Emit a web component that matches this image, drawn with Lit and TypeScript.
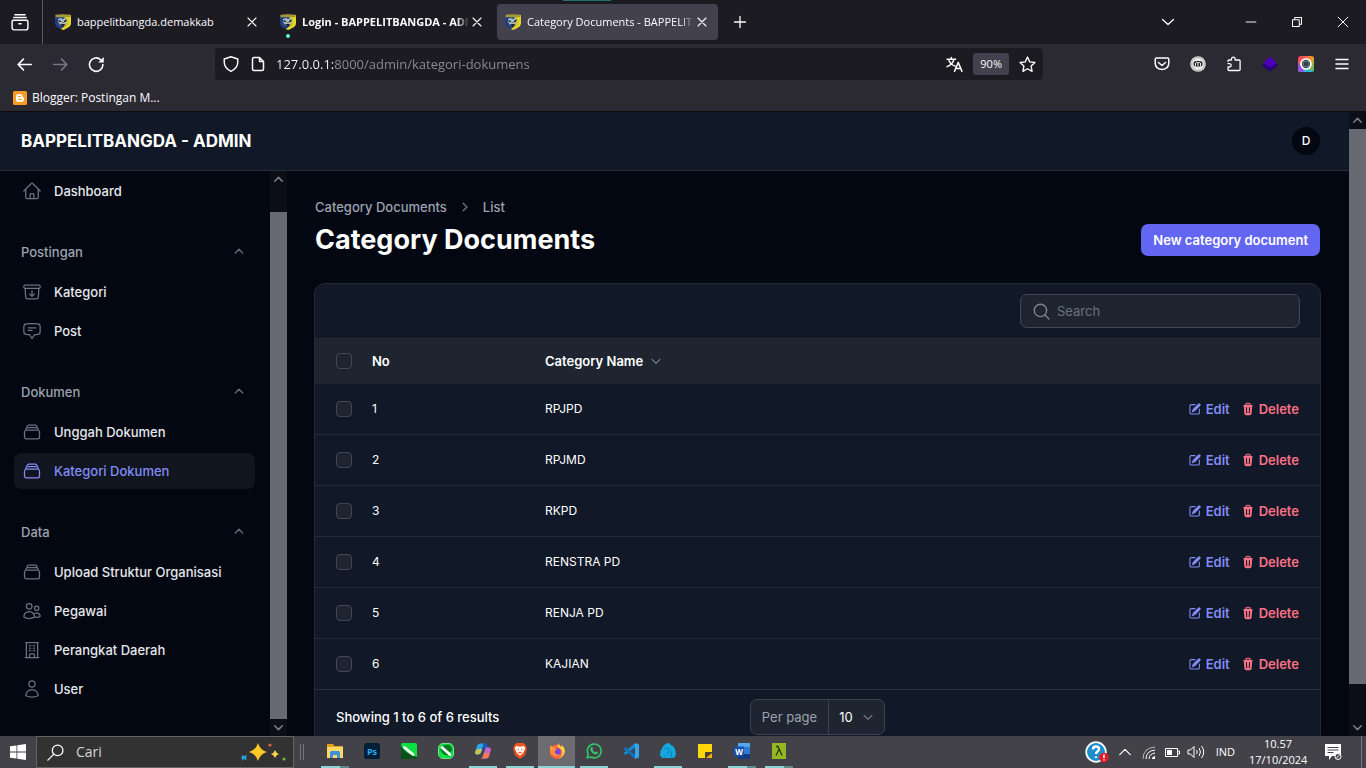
import { LitElement, html, svg, css, nothing, TemplateResult } from "lit";
import { customElement } from "lit/decorators.js";
import { classMap } from "lit/directives/class-map.js";

const OUTLINE: Record<string, string> = {
  home: "m2.25 12 8.954-8.955c.44-.439 1.152-.439 1.591 0L21.75 12M4.5 9.75v10.125c0 .621.504 1.125 1.125 1.125H9.75v-4.875c0-.621.504-1.125 1.125-1.125h2.25c.621 0 1.125.504 1.125 1.125V21h4.125c.621 0 1.125-.504 1.125-1.125V9.75M8.25 21h8.25",
  archive: "m20.25 7.5-.625 10.632a2.25 2.25 0 0 1-2.247 2.118H6.622a2.25 2.25 0 0 1-2.247-2.118L3.75 7.5m8.25 3v6.75m0 0-3-3m3 3 3-3M3.375 7.5h17.25c.621 0 1.125-.504 1.125-1.125v-1.5c0-.621-.504-1.125-1.125-1.125H3.375c-.621 0-1.125.504-1.125 1.125v1.5c0 .621.504 1.125 1.125 1.125Z",
  chat: "M7.5 8.25h9m-9 3H12m-9.75 1.51c0 1.6 1.123 2.994 2.707 3.227 1.129.166 2.27.293 3.423.379.35.026.67.21.865.501L12 21l2.755-4.133a1.14 1.14 0 0 1 .865-.501 48.172 48.172 0 0 0 3.423-.379c1.584-.233 2.707-1.626 2.707-3.228V6.741c0-1.602-1.123-2.995-2.707-3.228A48.394 48.394 0 0 0 12 3c-2.392 0-4.744.175-7.043.513C3.373 3.746 2.25 5.14 2.25 6.741v6.018Z",
  stack: "M6 6.878V6a2.25 2.25 0 0 1 2.25-2.25h7.5A2.25 2.25 0 0 1 18 6v.878m-12 0c.235-.083.487-.128.75-.128h10.5c.263 0 .515.045.75.128m-12 0A2.25 2.25 0 0 0 4.5 9v.878m13.5-3A2.25 2.25 0 0 1 19.5 9v.878m0 0a2.246 2.246 0 0 0-.75-.128H5.25c-.263 0-.515.045-.75.128m15 0A2.25 2.25 0 0 1 21 12v6a2.25 2.25 0 0 1-2.25 2.25H5.25A2.25 2.25 0 0 1 3 18v-6c0-.98.626-1.813 1.5-2.122",
  office: "M3.75 21h16.5M4.5 3h15M5.25 3v18m13.5-18v18M9 6.75h1.5m-1.5 3h1.5m-1.5 3h1.5m3-6H15m-1.5 3H15m-1.5 3H15M9 21v-3.375c0-.621.504-1.125 1.125-1.125h3.75c.621 0 1.125.504 1.125 1.125V21",
  users: "M15 19.128a9.38 9.38 0 0 0 2.625.372 9.337 9.337 0 0 0 4.121-.952 4.125 4.125 0 0 0-7.533-2.493M15 19.128v-.003c0-1.113-.285-2.16-.786-3.07M15 19.128v.106A12.318 12.318 0 0 1 8.624 21c-2.331 0-4.512-.645-6.374-1.766l-.001-.109a6.375 6.375 0 0 1 11.964-3.07M12 6.375a3.375 3.375 0 1 1-6.75 0 3.375 3.375 0 0 1 6.75 0Zm8.25 2.25a2.625 2.625 0 1 1-5.25 0 2.625 2.625 0 0 1 5.25 0Z",
  user: "M15.75 6a3.75 3.75 0 1 1-7.5 0 3.75 3.75 0 0 1 7.5 0ZM4.501 20.118a7.5 7.5 0 0 1 14.998 0A17.933 17.933 0 0 1 12 21.75c-2.676 0-5.216-.584-7.499-1.632Z",
};

const outline = (name: string) => html`<svg class="nav-icon" viewBox="0 0 24 24" fill="none" stroke="currentColor" stroke-width="1.5" stroke-linecap="round" stroke-linejoin="round"><path d=${OUTLINE[name]} /></svg>`;

const chevron = (dir: "up" | "down" | "right", size = 18) => {
  const d = { up: "M5.75 11.25 10 7l4.25 4.25", down: "M5.75 8.25 10 12.5l4.25-4.25", right: "M8 5.75 12.25 10 8 14.25" }[dir];
  return html`<svg class="chev" width=${size} height=${size} viewBox="0 0 20 20" fill="none" stroke="currentColor" stroke-width="1.5" stroke-linecap="round" stroke-linejoin="round"><path d=${d} /></svg>`;
};

const line = (size: number, body: TemplateResult<2>, cls = "", width = 1.5) => html`<svg class=${cls} width=${size} height=${size} viewBox="0 0 16 16" fill="none" stroke="currentColor" stroke-width=${width} stroke-linecap="round" stroke-linejoin="round">${body}</svg>`;

const closeIcon = () => line(16, svg`<path d="m4 4 8 8M12 4l-8 8" />`, "", 1.1);

const crest = () => html`<svg width="16" height="16" viewBox="0 0 16 16">
  <path d="M0 1.500Q8-.5 16 1.500V9c0 3.600-4 5.500-8 7-4-1.500-8-3.400-8-7Z" fill="#243c84" />
  <path d="M9 1h7v8c0 3.600-4 5.500-8 7l-2-1 5-4Z" fill="#e8d725" />
  <path d="M.5.8Q8-.4 15.500.8v2.400H.5Z" fill="#a49a35" />
  <path d="m3 5 3-1 2 1 3-1 1 2-1 4-3 2-3-1-2-3Z" fill="#9fb9c4" />
  <path d="m3 6 3 1v1H4Zm6 1 3-2-1 3H9Zm-4 3h5l-2 3Z" fill="#18222d" />
  <path d="m10 11 4-6-1 6-5 4Z" fill="#d3c021" />
  <path d="M7 8h2v1H7Z" fill="#d75d42" />
</svg>`;

interface Tab { title: string; bold?: boolean; active?: boolean }
const TABS: Tab[] = [
  { title: "bappelitbangda.demakkab" },
  { title: "Login - BAPPELITBANGDA - ADMIN", bold: true },
  { title: "Category Documents - BAPPELITBANGDA", active: true },
];

const GROUPS = [
  { label: "", items: [{ icon: "home", text: "Dashboard" }] },
  { label: "Postingan", items: [{ icon: "archive", text: "Kategori" }, { icon: "chat", text: "Post" }] },
  { label: "Dokumen", items: [{ icon: "stack", text: "Unggah Dokumen" }, { icon: "stack", text: "Kategori Dokumen", active: true }] },
  { label: "Data", items: [{ icon: "stack", text: "Upload Struktur Organisasi" }, { icon: "users", text: "Pegawai" }, { icon: "office", text: "Perangkat Daerah" }, { icon: "user", text: "User" }] },
] as { label: string; items: { icon: string; text: string; active?: boolean }[] }[];

const ROWS = ["RPJPD", "RPJMD", "RKPD", "RENSTRA PD", "RENJA PD", "KAJIAN"];

const APPS: { name: string; state?: "open" | "multi" | "focus"; art: TemplateResult<2> }[] = [
  { name: "File Explorer", state: "multi", art: svg`<path d="M0 1h6l1.500 2H16v12H0Z" fill="#e2a21d" /><path d="M0 4h16v11H0Z" fill="#ffd868" /><path d="M3 15V9.500C3 8.500 3.800 8 4.500 8h7c.7 0 1.500.5 1.500 1.500V15h-3v-3H6v3Z" fill="#3f92d6" />` },
  { name: "Photoshop", art: svg`<rect width="16" height="16" rx="2.500" fill="#001e36" /><text x="8" y="11.500" text-anchor="middle" font-family="Open Sans" font-size="9" font-weight="700" fill="#31a8ff">Ps</text>` },
  { name: "CorelDRAW", art: svg`<rect width="16" height="16" rx="1.500" fill="#08e040" /><path d="M0 3Q5 11 16 14v2H0Z" fill="#07501a" /><path d="m3.500 4.500 8.500 7" stroke="#fff" stroke-width="2.800" stroke-linecap="round" />` },
  { name: "Corel Photo-Paint", art: svg`<rect x=".5" y=".5" width="15" height="15" rx="4.500" fill="#08d53c" stroke="#73e58c" /><path d="M2.500 6q3-5 9-4l3 4-4 6Q4 13 2.500 6Z" fill="#087a22" /><path d="M2 9q3 4 8 5H5q-3-1-3-5Z" fill="#17f050" /><path d="m4 4.500 8 7" stroke="#fff" stroke-width="2.800" stroke-linecap="round" />` },
  { name: "Copilot", state: "open", art: svg`<path d="M5 .5h5.500Q8.500 1 8 3L6 9.500Q5.300 11.500 3 11.500H2Q-.5 11.500.3 8.500L2 3Q2.700.5 5 .5Z" fill="#2ba5e6" /><path d="M.3 8.500Q1 6 3 6h4L6 9.500q-.7 2-3 2H2q-2.500 0-1.700-3Z" fill="#c9c452" /><path d="M8 .5h2.500q1.500 0 2 1.700l.8 2.600H11q-2 0-2.700 2L7.500 9 7 6 8 3Z" fill="#2358b8" /><path d="M11 4.500h3q2.500 0 1.700 3L14 13q-.7 2.500-3 2.500H5.500q2-.5 2.500-2.500l2-6.500q.3-1.500 1-2Z" fill="#c766cf" /><path d="M9 10h6l-1 3q-.7 2.500-3 2.500H5.500q2-.5 2.500-2.500Z" fill="#f2785c" />` },
  { name: "Brave", state: "open", art: svg`<path d="M4.500 0h7l2 2 1.500 3-2 7-5 4-5-4-2-7 1.500-3Z" fill="#f4511e" /><path d="m4 3 4 .7L12 3l1.200 2.500L11.500 9 10 11l-2 1.500L6 11 4.500 9 2.800 5.500Z" fill="#fff" /><path d="m4.500 5.500 2.500.7v1.300Zm7 0L9 6.200v1.300ZM6 9.500l2-1 2 1-2 1.300Z" fill="#f4511e" />` },
  { name: "Firefox", state: "focus", art: svg`<circle cx="8" cy="8.700" r="7.300" fill="#ff643f" /><path d="M10 0q0 3 2 4 1-1 1-2 3 3 3 6-1 6-7 8 5-3 4-8-2-4-5-4Z" fill="#ffd23b" /><path d="M1 5q0-2 1-3l1 2 4 1 3 3-2 4q-4 1-6-2Z" fill="#ff9f33" /><circle cx="8.200" cy="8.700" r="3.500" fill="#7c42dd" /><path d="M3 6q3-1 5 1-3 0-2 3 2 3 5 1-2 4-6 2Q2 10 3 6Z" fill="#ff8d38" />` },
  { name: "WhatsApp", state: "open", art: svg`<path d="m1.200 14.800 1-3.600A6.900 6.900 0 1 1 5 14Z" fill="none" stroke="#31c76a" stroke-width="1.600" /><path d="M5.200 4.300c.6-.6 1-.5 1.300.1l.6 1.300-.7 1.100c.6 1.200 1.500 2 2.700 2.600l1-1 1.700.8c.4.3-.1 1.600-1.300 2.100-2.700.7-6.600-3.200-6.200-5.400Z" fill="#31c76a" />` },
  { name: "Visual Studio Code", art: svg`<path d="m12 0 4 1.600v12.800L12 16Z" fill="#35a6ee" /><path d="M12 0v4.300L2.500 12 .5 10.300Z" fill="#168bd5" /><path d="m.5 5.700 2-1.700L12 11.700V16Z" fill="#1174bb" />` },
  { name: "Laragon MySQL", state: "open", art: svg`<path d="M8 0q2 0 3 2 3 1 4 4l1 5-1 3-2 1H3q-2 0-3-3 0-4 2-7 2-4 6-5Z" fill="#12a8df" /><path d="M4 6q3-2 5 0 1 3-2 5M11 8q1 3 0 6M5 12v2" fill="none" stroke="#0b82b4" />` },
  { name: "Sticky Notes", art: svg`<path d="M1 1h14v9l-5 5H1Z" fill="#ffd60a" /><path d="M8 15V9h7v6Z" fill="#474230" /><path d="m9 15 6-5v5Z" fill="#f4ae13" />` },
  { name: "Word", state: "multi", art: svg`<rect x="4" width="12" height="16" rx="1" fill="#2b7cd3" /><path d="M4 0h12v4H4Z" fill="#55a7ed" /><path d="M4 11h12v5H4Z" fill="#143c80" /><rect y="3.500" width="10" height="10" rx="1" fill="#174fae" /><text x="5" y="11.500" text-anchor="middle" font-family="Open Sans" font-size="8" font-weight="700" fill="#fff">W</text>` },
  { name: "Lambda", state: "multi", art: svg`<rect x="1" width="14" height="16" fill="#93b71e" /><path d="M5 3.500h2l4 9M8 6.500l-3 6" fill="none" stroke="#263411" stroke-width="1.300" />` },
];

@customElement("app-root")
export class AppRoot extends LitElement {
  static styles = css`
    :host { display: flex; flex-direction: column; height: 100vh; overflow: hidden; background: #030712; color: #fff; font-family: Inter, sans-serif; font-size: 13px; line-height: 20px; }
    * { box-sizing: border-box; }
    button, input, select { font: inherit; color: inherit; margin: 0; padding: 0; border: 0; background: none; outline: none; }
    a { color: inherit; text-decoration: none; }
    svg { display: block; flex: none; }

    /* browser chrome */
    .chrome { flex: none; background: #2b2a33; color: #fbfbfe; font: 12px/16px "Open Sans", sans-serif; border-bottom: 1px solid #0c0c0d; }
    .tabs { position: relative; display: flex; align-items: center; height: 44px; background: #1c1b22; }
    .tabs::before { content: ""; position: absolute; top: 0; left: 563px; width: 48px; height: 1px; background: #1f6f70; }
    .history { display: grid; place-items: center; width: 43px; height: 44px; margin-right: 4px; padding-right: 3px; border-right: 1px solid #5b5a63; }
    .tab { position: relative; display: flex; align-items: center; gap: 6px; width: 221px; height: 36px; margin-right: 4px; padding: 0 8px; border-radius: 4px; font-size: 11px; }
    .tab.active { background: #42414d; }
    .tab-title { flex: 1; min-width: 0; overflow: hidden; white-space: nowrap; mask-image: linear-gradient(to left, transparent, #000 12px); }
    .tab.short .tab-title { mask-image: none; }
    .tab.bold .tab-title { font-weight: 700; }
    .tab button { margin-left: -6px; }
    .sound { position: absolute; left: 14px; bottom: 2px; width: 4px; height: 4px; border-radius: 50%; background: #54ffbd; }
    .new-tab { margin-left: 10px; }
    .window { display: flex; align-items: center; margin-left: auto; }
    .window button { display: grid; place-items: center; width: 46px; height: 44px; }
    .window .list { margin-right: 37px; }
    .bar { display: flex; align-items: center; height: 40px; padding: 0 15px; }
    .nav { display: flex; gap: 18px; }
    .nav .off { color: #777680; }
    .nav button, .ext button { display: grid; place-items: center; width: 18px; height: 24px; }
    .url { display: flex; align-items: center; gap: 10px; flex: 0 1 828px; height: 32px; margin-left: 110px; padding: 0 7px; border-radius: 4px; background: #1c1b22; }
    .url input { flex: 1; min-width: 0; font-size: 13px; color: transparent; background: linear-gradient(to right, #fbfbfe 58px, #8d8c96 58px); background-clip: text; -webkit-background-clip: text; }
    .zoom { padding: 3px 7px; border-radius: 3px; background: #42414d; font-size: 11px; }
    .ext { display: flex; gap: 18px; margin-left: auto; }
    .bookmarks { display: flex; height: 27px; padding: 0 13px; align-items: center; }
    .bookmarks a { display: flex; gap: 5px; align-items: center; }

    /* page */
    .page { flex: 1; min-height: 0; display: grid; grid-template-columns: minmax(0, 1fr) 17px; }
    .view { display: flex; flex-direction: column; min-height: 0; min-width: 0; }
    .topbar { flex: none; display: flex; align-items: center; justify-content: space-between; height: 59px; padding: 0 29px 0 21px; background: #111827; border-bottom: 1px solid #262c38; }
    .brand { font-size: 17px; font-weight: 700; }
    .avatar { width: 28px; height: 28px; border-radius: 50%; background: #030712; font-size: 12px; font-weight: 500; }
    .body { flex: 1; min-height: 0; display: flex; }
    .side { flex: none; display: grid; grid-template-columns: 1fr 17px; width: 287px; min-height: 0; }
    .side nav { display: flex; flex-direction: column; gap: 25px; padding: 2px 15px 0 14px; overflow: hidden; }
    .group { display: flex; flex-direction: column; gap: 4px; }
    .group-head { display: flex; align-items: center; justify-content: space-between; height: 36px; padding: 0 7px; color: #9ca3af; font-weight: 500; }
    .group-items { display: flex; flex-direction: column; gap: 3px; }
    .item { display: flex; align-items: center; gap: 12px; height: 36px; padding: 0 8px; border-radius: 7px; color: #e5e7eb; font-weight: 500; }
    .item.active { background: #11151f; color: #818cf8; }
    .nav-icon { width: 20px; height: 20px; color: #6b7280; }
    .item.active .nav-icon { color: #818cf8; }
    .chev { color: #6b7280; }
    .scroll { display: flex; flex-direction: column; background: #0b0d17; color: #777a82; }
    .scroll span { display: grid; place-items: center; height: 17px; }
    .scroll i { background: #686a72; }
    .side .scroll i { flex: 1; margin-top: 24px; }
    .page > .scroll i { flex: 1; }
    .page > .scroll .rest { flex: none; height: 35px; }
    main { flex: 1; min-width: 0; padding: 26px 28px 0; overflow: hidden; }
    .crumbs { display: flex; align-items: center; gap: 9px; color: #9ca3af; font-weight: 500; }
    .title-row { display: flex; align-items: center; justify-content: space-between; height: 46px; padding-right: 1px; }
    h1 { margin: 0; font-size: 27px; line-height: 32px; font-weight: 700; }
    .primary { height: 32px; padding: 0 12px; border-radius: 7px; background: #6366f1; font-weight: 600; }
    .card { margin: 20px 0 0 -1px; border: 1px solid #232936; border-radius: 11px; background: #111827; }
    .tools { display: flex; justify-content: flex-end; padding: 10px 20px; }
    .search { display: flex; align-items: center; gap: 7px; width: 280px; height: 34px; padding: 0 12px; border: 1px solid #414753; border-radius: 7px; background: #1e2530; color: #7d838e; }
    .search input { flex: 1; min-width: 0; }
    .search input::placeholder { color: #6b7280; opacity: 1; }
    table { width: 100%; border-collapse: collapse; table-layout: fixed; }
    th, td { padding: 0; text-align: left; font-weight: 400; border-top: 1px solid #252c38; }
    th { height: 45px; background: #1e2530; font-weight: 600; }
    td { height: 51px; font-size: 12px; }
    tbody tr:first-child td { border-top-color: #1e2530; }
    tbody tr:last-child td { border-bottom: 1px solid #2b313d; }
    .c-check { width: 57px; padding-left: 21px; }
    .c-no { width: 173px; }
    .c-act { width: 240px; padding-right: 21px; }
    input[type="checkbox"] { display: block; appearance: none; width: 16px; height: 16px; border: 1px solid #414753; border-radius: 4px; background: #1e2530; }
    .sort { display: flex; align-items: center; gap: 4px; font-weight: 600; }
    .actions { display: flex; justify-content: flex-end; gap: 11px; font-size: 13px; font-weight: 600; }
    .actions a, .actions button { display: flex; align-items: center; gap: 4px; }
    .actions a { color: #818cf8; }
    .actions button { color: #fb7185; }
    .foot { display: grid; grid-template-columns: 1fr auto 1fr; align-items: center; padding: 9px 21px; font-weight: 500; }
    .per { display: flex; align-items: center; height: 36px; border: 1px solid #3b414d; border-radius: 7px; background: #1e2530; color: #9ca3af; font-weight: 400; }
    .per label { padding: 0 11px; }
    .pick { display: flex; align-items: center; height: 34px; padding: 0 7px 0 10px; border-left: 1px solid #3b414d; color: #fff; }
    .pick select { appearance: none; width: 20px; }

    /* taskbar */
    .taskbar { flex: none; display: flex; height: 32px; background: #434248; font: 12px/16px "Open Sans", sans-serif; }
    .start { display: grid; place-items: center; width: 36px; }
    .find { display: flex; align-items: center; gap: 12px; width: 258px; padding: 0 6px 0 10px; border: 1px solid #626166; background: #323233; font-size: 14px; }
    .find input { flex: 1; min-width: 0; }
    .find input::placeholder { color: #d6d6d6; opacity: 1; }
    .grip { width: 4px; height: 16px; margin: 8px 12px 0 6px; border: 1px solid #77767a; border-width: 0 1px; }
    .app { display: grid; grid-template-rows: 30px 2px; justify-items: center; align-items: center; width: 37px; }
    .app.focus { background: #6c6b70; }
    .line { width: 28px; height: 2px; background: #8ad5d3; }
    .focus .line { width: 100%; }
    .multi .line { background: linear-gradient(to right, #8ad5d3 19px, #5c8b8c 19px); }
    .tray { display: flex; align-items: center; margin-left: auto; gap: 7px; }
    .lang { margin-left: 4px; font-size: 11px; }
    .clock { width: 58px; margin: 0 10px 0 7px; text-align: center; font-size: 11px; }
    .peek { width: 1px; height: 32px; margin: 0 4px 0 12px; background: #77767a; }
  `;

  private renderTab(t: Tab) {
    return html`<div class=${classMap({ tab: true, active: !!t.active, bold: !!t.bold, short: !t.active && !t.bold })}>
      ${crest()}<span class="tab-title">${t.title}</span>
      ${t.bold ? html`<span class="sound"></span>` : nothing}
      <button aria-label="Close tab">${closeIcon()}</button>
    </div>`;
  }

  private renderChrome() {
    return html`<header class="chrome">
      <div class="tabs">
        <button class="history" aria-label="Recent browsing">${line(18, svg`<path d="M3.500 1.500h9M2.500 4h11M2 6.500h12q1 0 1 1V13q0 2-2 2H3q-2 0-2-2V7.500q0-1 1-1ZM7 9.500h2" />`, "", 1.3)}</button>
        ${TABS.map((t) => this.renderTab(t))}
        <button class="new-tab" aria-label="New tab">${line(16, svg`<path d="M8 2.500v11M2.500 8h11" />`, "", 1.3)}</button>
        <div class="window">
          <button class="list" aria-label="List all tabs">${line(16, svg`<path d="m2.500 5.500 5.500 5 5.500-5" />`, "", 1.3)}</button>
          <button aria-label="Minimize">${line(12, svg`<path d="M1.500 8h13" />`, "", 1.3)}</button>
          <button aria-label="Restore">${line(12, svg`<path d="M2 5h9v9H2ZM5 5V2h9v9h-3" />`, "", 1.4)}</button>
          <button aria-label="Close">${line(12, svg`<path d="m1.500 1.500 13 13m0-13-13 13" />`, "", 1.3)}</button>
        </div>
      </div>
      <div class="bar">
        <div class="nav">
          <button aria-label="Back">${line(17, svg`<path d="M14.500 8H2M7 3 2 8l5 5" />`)}</button>
          <button class="off" aria-label="Forward">${line(17, svg`<path d="M1.500 8H14M9 3l5 5-5 5" />`)}</button>
          <button aria-label="Reload">${line(17, svg`<path d="M14 8a6.300 6.300 0 1 1-2-4.500" /><path d="M14.800 1v5.200H9.600Z" fill="currentColor" stroke="none" />`)}</button>
        </div>
        <div class="url">
          ${line(18, svg`<path d="M8 1.500 14 3.500v3q0 5-6 8-6-3-6-8v-3Z" />`, "", 1.3)}
          ${line(16, svg`<path d="M4 1.500h5.500l4 4V13q0 1.500-1.500 1.500H4Q2.500 14.500 2.500 13V3Q2.500 1.500 4 1.500ZM9.500 2v3.500h4" />`)}
          <input aria-label="Address" .value=${"127.0.0.1:8000/admin/kategori-dokumens"} />
          ${line(17, svg`<path d="M1 3h8M5 1.500V3M2.500 3q1 5 6 6.500M7.500 3Q6.500 8 1 10M8 14.500l3.500-8.500 3.500 8.500M9.300 11.800h4.500" />`, "", 1.4)}
          <span class="zoom">90%</span>
          ${line(17, svg`<path d="m8 1 2.100 4.500 4.900.6-3.600 3.400.9 4.900L8 12l-4.300 2.400.9-4.900L1 6.100l4.900-.6Z" />`, "", 1.3)}
        </div>
        <div class="ext">
          <button aria-label="Pocket">${line(16, svg`<path d="M2.500 2h11q1.300 0 1.300 1.300V7q0 6-6.800 6.500Q1.200 13 1.200 7V3.300Q1.200 2 2.500 2ZM4.500 6.500 8 9.500l3.500-3" />`)}</button>
          <button aria-label="Extension"><svg width="16" height="16" viewBox="0 0 16 16"><circle cx="8" cy="8" r="7.800" fill="#d8d8da" /><circle cx="8" cy="8" r="6.300" fill="#eee" stroke="#99999d" stroke-width=".7" /><rect x="3.500" y="5" width="9" height="5.500" rx="2.500" fill="#222" /><path d="M5.500 10V7q1.200-1.500 2.500 0 1.300-1.500 2.500 0v3M8 7v3" fill="none" stroke="#eee" /></svg></button>
          <button aria-label="Extensions">${line(16, svg`<path d="M2 5.500V5q0-1 1-1h2.500V3a1.800 1.800 0 0 1 3.600 0v1h4q1 0 1 1v8.500q0 1-1 1H3q-1 0-1-1V11h1.500a1.700 1.700 0 0 0 0-3.400H2" />`, "", 1.3)}</button>
          <button aria-label="Layers"><svg width="16" height="16" viewBox="0 0 16 16"><path d="m0 9 8-6 8 6-8 6.500Z" fill="#27007a" /><path d="m1.500 6.500 6.500-6 6.500 6L8 12Z" fill="#4b00b5" /></svg></button>
          <button aria-label="Screenshot"><svg width="16" height="16" viewBox="0 0 16 16"><defs><linearGradient id="g" x1="0" y1="0" x2="1" y2="1"><stop stop-color="#f22c72" /><stop offset=".5" stop-color="#f49a2c" /><stop offset="1" stop-color="#27cc72" /></linearGradient></defs><rect width="16" height="16" rx="2.500" fill="url(#g)" /><path d="M0 6l7 10H2.500Q0 16 0 13.500Z" fill="#9250ee" /><path d="M5 16l3-4 7 4Z" fill="#29b9e8" /><circle cx="8" cy="8" r="5" fill="#34424c" stroke="#fff" stroke-width="1.700" /><circle cx="8" cy="8" r="3" fill="none" stroke="#70808a" /></svg></button>
          <button aria-label="Menu">${line(16, svg`<path d="M2 3.500h12M2 8h12M2 12.500h12" />`)}</button>
        </div>
      </div>
      <div class="bookmarks"><a href="#"><svg width="14" height="14" viewBox="0 0 14 14"><rect width="14" height="14" rx="1.500" fill="#f59a23" /><path d="M5.500 3h2q2 0 2 2v1q1.500 0 1.500 1.500Q11 11 8.500 11h-3Q3 11 3 8.500v-3Q3 3 5.500 3Z" fill="#fff" /><path d="M5.500 5.500h2M5.500 8.500h3" stroke="#f59a23" stroke-linecap="round" /></svg>Blogger: Postingan M...</a></div>
    </header>`;
  }

  private renderSidebar() {
    return html`<aside class="side">
      <nav aria-label="Main">
        ${GROUPS.map((g) => html`<div class="group">
          ${g.label ? html`<button class="group-head">${g.label}${chevron("up")}</button>` : nothing}
          <div class="group-items">${g.items.map((i) => html`<a href="#" class=${classMap({ item: true, active: !!i.active })}>${outline(i.icon)}${i.text}</a>`)}</div>
        </div>`)}
      </nav>
      <div class="scroll"><span>${this.arrow("up")}</span><i></i><span>${this.arrow("down")}</span></div>
    </aside>`;
  }

  private arrow(dir: "up" | "down") {
    return line(11, dir === "up" ? svg`<path d="m2.500 10.500 5.500-5.500 5.500 5.500" />` : svg`<path d="m2.500 5.500 5.500 5.500 5.500-5.500" />`, "", 2.4);
  }

  private renderRow(name: string, index: number) {
    return html`<tr>
      <td class="c-check"><input type="checkbox" aria-label=${`Select ${name}`} /></td>
      <td>${index + 1}</td>
      <td>${name}</td>
      <td class="c-act"><div class="actions">
        <a href="#"><svg width="14" height="14" viewBox="0 0 20 20" fill="currentColor"><path d="m5.433 13.917 1.262-3.155A4 4 0 0 1 7.580 9.420l6.920-6.918a2.121 2.121 0 0 1 3 3l-6.920 6.918c-.383.383-.84.685-1.343.886l-3.154 1.262a.5.5 0 0 1-.65-.65Z" /><path d="M3.500 5.750c0-.69.56-1.250 1.250-1.250H10A.75.75 0 0 0 10 3H4.750A2.750 2.750 0 0 0 2 5.750v9.500A2.750 2.750 0 0 0 4.750 18h9.500A2.750 2.750 0 0 0 17 15.250V10a.75.75 0 0 0-1.500 0v5.250c0 .69-.56 1.250-1.250 1.250h-9.500c-.69 0-1.250-.56-1.250-1.250v-9.500Z" /></svg>Edit</a>
        <button><svg width="14" height="14" viewBox="0 0 20 20" fill="currentColor"><path fill-rule="evenodd" clip-rule="evenodd" d="M8.750 1A2.750 2.750 0 0 0 6 3.750v.443c-.795.077-1.584.176-2.365.298a.75.75 0 1 0 .23 1.482l.149-.022.841 10.518A2.750 2.750 0 0 0 7.596 19h4.807a2.750 2.750 0 0 0 2.742-2.530l.841-10.520.149.023a.75.75 0 0 0 .23-1.482A41.030 41.030 0 0 0 14 4.193V3.750A2.750 2.750 0 0 0 11.250 1h-2.500ZM10 4c.84 0 1.673.025 2.500.075V3.750c0-.69-.56-1.250-1.250-1.250h-2.500c-.69 0-1.250.56-1.250 1.250v.325C8.327 4.025 9.160 4 10 4ZM8.580 7.720a.75.75 0 0 0-1.500.06l.3 7.500a.75.75 0 1 0 1.500-.06l-.3-7.500Zm4.340.06a.75.75 0 1 0-1.500-.06l-.3 7.500a.75.75 0 1 0 1.500.06l.3-7.500Z" /></svg>Delete</button>
      </div></td>
    </tr>`;
  }

  private renderMain() {
    return html`<main>
      <div class="crumbs"><a href="#">Category Documents</a>${chevron("right")}<a href="#">List</a></div>
      <div class="title-row"><h1>Category Documents</h1><button class="primary">New category document</button></div>
      <section class="card">
        <div class="tools"><label class="search">${line(17, svg`<circle cx="7" cy="7" r="5.800" /><path d="m11.300 11.300 3.700 3.700" />`, "", 1.3)}<input type="text" aria-label="Search" placeholder="Search" /></label></div>
        <table>
          <thead><tr>
            <th class="c-check"><input type="checkbox" aria-label="Select all" /></th>
            <th class="c-no">No</th>
            <th><button class="sort">Category Name${chevron("down")}</button></th>
            <th class="c-act"></th>
          </tr></thead>
          <tbody>${ROWS.map((r, i) => this.renderRow(r, i))}</tbody>
        </table>
        <div class="foot">
          <span>Showing 1 to 6 of 6 results</span>
          <div class="per"><label for="per">Per page</label><div class="pick"><select id="per"><option>10</option></select>${chevron("down")}</div></div>
        </div>
      </section>
    </main>`;
  }

  private renderTaskbar() {
    return html`<footer class="taskbar">
      <button class="start" aria-label="Start"><svg width="16" height="16" viewBox="0 0 16 16" fill="#fff"><path d="M0 2.300 6.500 1.400v6.200H0ZM7.300 1.300 16 0v7.600H7.300ZM0 8.400h6.500v6.200L0 13.700ZM7.300 8.400H16V16l-8.700-1.300Z" /></svg></button>
      <label class="find">${line(17, svg`<circle cx="10" cy="6" r="5" /><path d="M6.500 9.500.8 15.200" />`, "", 1.2)}<input type="text" aria-label="Cari" placeholder="Cari" />
        <svg width="48" height="20" viewBox="0 0 48 20"><path d="M19 1q2 7 9 9-7 2-9 9-2-7-9-9 7-2 9-9Z" fill="#fcc928" /><path d="M36 8q1 3 4 4-3 1-4 4-1-3-4-4 3-1 4-4Z" fill="#fcd34b" /><path d="m3 13 2 1 3-1-1 3 1 2-3-1-2 2v-3l-2-1h2Z" fill="#27a3d8" /><circle cx="31" cy="3" r="1.600" fill="#e1633c" /><circle cx="45" cy="17" r="1.600" fill="#71b441" /></svg></label>
      <span class="grip"></span>
      ${APPS.map((a) => html`<button class=${classMap({ app: true, multi: a.state === "multi", focus: a.state === "focus" })} aria-label=${a.name}><svg width="16" height="16" viewBox="0 0 16 16">${a.art}</svg>${a.state ? html`<span class="line"></span>` : nothing}</button>`)}
      <div class="tray">
        <svg width="26" height="22" viewBox="0 0 26 22"><circle cx="11" cy="11" r="9.800" fill="#1c8dca" stroke="#fff" stroke-width="1.800" /><path d="M8 8.500q0-3 3-3t3 2.500q0 1.500-1.500 2.500Q11 11.500 11 13M11 15.500v1.500" fill="none" stroke="#fff" stroke-width="2.400" /><circle cx="19" cy="16.500" r="4.800" fill="#e41a24" /><path d="M19 13.500v3.500M19 18.200v1.300" stroke="#fff" stroke-width="1.500" /></svg>
        ${line(14, svg`<path d="m2 11 6-6 6 6" />`, "", 1.4)}
        <svg width="18" height="16" viewBox="0 0 18 16" fill="none" stroke="#fff"><path d="M4 15Q4 4 16 3" opacity=".6" /><path d="M7 15q0-8 9-9M10 15q0-5 6-6" /><path d="M13 15q0-2.500 3-3v3Z" fill="#fff" stroke="none" /></svg>
        <svg width="16" height="16" viewBox="0 0 16 16" fill="none" stroke="#fff"><path d="M1.500 4.500h12v8h-12ZM14 7h1.500v3H14" /><path d="M3 6h5v5H3Z" fill="#fff" stroke="none" /></svg>
        <svg width="18" height="16" viewBox="0 0 18 16" fill="none" stroke="#fff"><path d="M1 6h2.500L7 2.500v11L3.500 10H1ZM9.500 6q1.500 2 0 4M12 4q3 4 0 8M14.500 2q4.500 6 0 12" /></svg>
        <span class="lang">IND</span>
        <div class="clock">10.57<br />17/10/2024</div>
        <svg width="18" height="18" viewBox="0 0 18 18"><path d="M1 1h16v12h-9l-3 4v-4H1Z" fill="#fff" /><path d="M3.500 4.500h11M3.500 7h11M3.500 9.500h6" stroke="#434248" stroke-width="1.200" /><circle cx="14" cy="13.500" r="3" fill="#434248" stroke="#fff" /><path d="m12 15.500 4-4" stroke="#fff" /></svg>
        <span class="peek"></span>
      </div>
    </footer>`;
  }

  render() {
    return html`${this.renderChrome()}
      <div class="page">
        <div class="view">
          <div class="topbar"><a class="brand" href="#">BAPPELITBANGDA - ADMIN</a><button class="avatar">D</button></div>
          <div class="body">${this.renderSidebar()}${this.renderMain()}</div>
        </div>
        <div class="scroll"><span>${this.arrow("up")}</span><i></i><span class="rest"></span><span>${this.arrow("down")}</span></div>
      </div>
      ${this.renderTaskbar()}`;
  }
}
